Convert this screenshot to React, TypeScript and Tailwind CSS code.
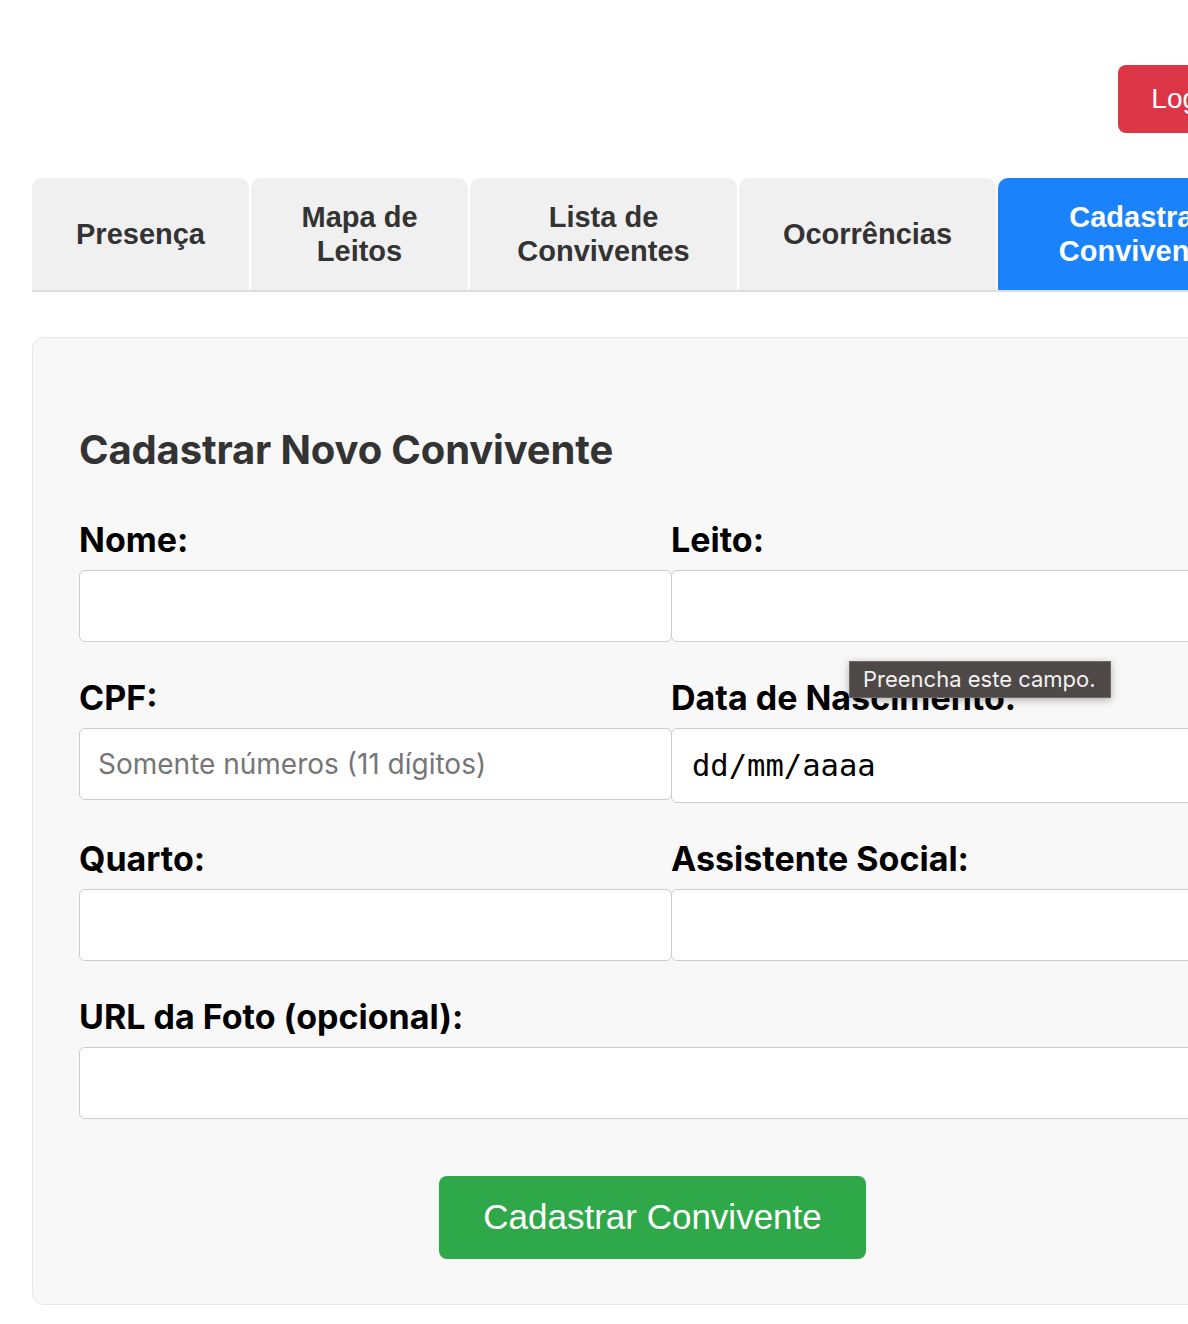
import React from "react";

const tabs = [
  { label: "Presença", width: "w-[217px]" },
  { label: "Mapa de Leitos", width: "w-[217px]" },
  { label: "Lista de Convivente", width: "w-[267px]" },
  { label: "Ocorrências", width: "w-[257px]" },
];

const Field = ({
  label,
  placeholder,
  wide,
}: {
  label: string;
  placeholder?: string;
  wide?: boolean;
}) => (
  <div className="mb-[37px]">
    <label className="block text-[34px] leading-[38px] font-bold text-black mb-[11px]">
      {label}
    </label>
    <div
      className={`${wide ? "w-[1185px]" : "w-[593px]"} h-[72px] bg-white border border-[#cccccc] rounded-[6px] flex items-center pl-[18px] text-[28px] text-[#767676]`}
    >
      {placeholder}
    </div>
  </div>
);

export default function App() {
  return (
    <div className="w-[1188px] h-[1324px] overflow-hidden bg-white">
      <div
        className="w-[1241px] ml-8"
        style={{ fontFamily: "Inter, Roboto, 'Liberation Sans', sans-serif" }}
      >
        <div className="flex justify-end pt-[65px]">
          <button
            className="h-[68px] px-[33px] rounded-[8px] bg-[#dc3545] text-white text-[28px] mr-[3px]"
            style={{ fontFamily: "'Liberation Sans', Arial, sans-serif" }}
          >
            Logout
          </button>
        </div>

        <div
          className="mt-[45px] flex gap-[2px] border-b-2 border-[#dddddd] w-[1300px]"
          style={{ fontFamily: "'Liberation Sans', Arial, sans-serif" }}
        >
          {tabs.map((t) => (
            <div
              key={t.label}
              className={`${t.width} h-[112px] shrink-0 bg-[#f0f0f0] rounded-t-[10px] flex items-center justify-center text-center text-[29px] leading-[34px] font-bold text-[#333333] px-[44px]`}
            >
              {t.label === "Lista de Convivente" ? (
                <span>
                  Lista de
                  <br />
                  Conviventes
                </span>
              ) : (
                t.label
              )}
            </div>
          ))}
          <div className="w-[278px] h-[112px] shrink-0 bg-[#1a82fb] rounded-t-[10px] flex items-center justify-center text-center text-[29px] leading-[34px] font-bold text-white">
            <span>
              Cadastrar
              <br />
              Convivente
            </span>
          </div>
        </div>

        <div className="relative mt-[45px] bg-[#f8f8f8] border border-[#e6e6e6] rounded-[12px] pt-[88px] px-[46px] pb-[45px]">
          <h2 className="text-[40px] leading-[48px] font-bold text-[#333333] mb-[47px] tracking-[-0.15px]">
            Cadastrar Novo Convivente
          </h2>

          <div className="grid grid-cols-[555px_555px] gap-x-[37px]">
            <Field label="Nome:" />
            <Field label="Leito:" />
            <Field label="CPF:" placeholder="Somente números (11 dígitos)" />
            <div className="mb-[37px]">
              <label className="block text-[34px] leading-[38px] font-bold text-black mb-[11px]">
                Data de Nascimento:
              </label>
              <div
                className="w-[593px] h-[75px] bg-white border border-[#cccccc] rounded-[6px] flex items-center pl-[20px] text-[30.5px] text-black"
                style={{ fontFamily: "'DejaVu Sans Mono', monospace" }}
              >
                dd/mm/aaaa
              </div>
            </div>
            <Field label="Quarto:" />
            <Field label="Assistente Social:" />
            <div className="col-span-2">
              <Field label="URL da Foto (opcional):" wide />
            </div>
          </div>

          <div className="flex justify-center mt-[20px]">
            <button
              className="w-[427px] h-[83px] rounded-[8px] bg-[#2fa84a] text-white text-[35px]"
              style={{ fontFamily: "'Liberation Sans', Arial, sans-serif" }}
            >
              Cadastrar Convivente
            </button>
          </div>

          <div className="absolute left-[816px] top-[323px] h-[37px] w-[262px] pl-[13px] flex items-center bg-[#4e4847] border border-[#6e6968] text-[#f2f2f2] text-[22px] shadow-[0_2px_8px_rgba(0,0,0,0.3)]">
            Preencha este campo.
          </div>
        </div>
      </div>
    </div>
  );
}
